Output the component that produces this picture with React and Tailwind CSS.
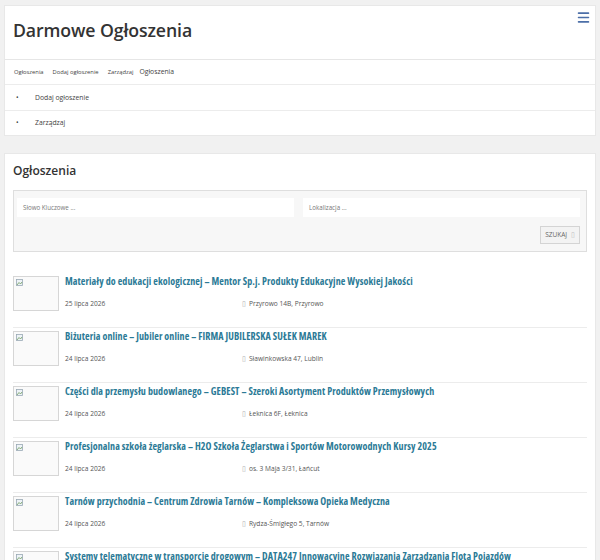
import { Menu } from "lucide-react";

const ads = [
  { title: "Materiały do edukacji ekologicznej – Mentor Sp.j. Produkty Edukacyjne Wysokiej Jakości", date: "25 lipca 2026", place: "Przyrowo 14B, Przyrowo" },
  { title: "Biżuteria online – Jubiler online – FIRMA JUBILERSKA SUŁEK MAREK", date: "24 lipca 2026", place: "Sławinkowska 47, Lublin" },
  { title: "Części dla przemysłu budowlanego – GEBEST – Szeroki Asortyment Produktów Przemysłowych", date: "24 lipca 2026", place: "Łeknica 6F, Łeknica" },
  { title: "Profesjonalna szkoła żeglarska – H2O Szkoła Żeglarstwa i Sportów Motorowodnych Kursy 2025", date: "24 lipca 2026", place: "os. 3 Maja 3/31, Łańcut" },
  { title: "Tarnów przychodnia – Centrum Zdrowia Tarnów – Kompleksowa Opieka Medyczna", date: "24 lipca 2026", place: "Rydza-Śmigłego 5, Tarnów" },
  { title: "Systemy telematyczne w transporcie drogowym – DATA247 Innowacyjne Rozwiązania Zarządzania Flotą Pojazdów", date: "24 lipca 2026", place: "Warszawa" },
];

function BrokenImg() {
  return (
    <div className="w-[46px] h-[35px] shrink-0 border border-[#d6d6d6] bg-[#fafafa] p-[2px]">
      <svg width="8" height="8" viewBox="0 0 8 8">
        <rect x="0.5" y="0.5" width="6" height="6" fill="#eef3f7" stroke="#9aa9b5" strokeWidth="0.8" />
        <path d="M1 6 L3 3.5 L4.5 5 L6 3" stroke="#6c9a5a" strokeWidth="0.8" fill="none" />
      </svg>
    </div>
  );
}

export default function App() {
  return (
    <div className="min-h-[560px] bg-[#f1f1f1] px-[4px] pt-[5px] font-['Open_Sans',sans-serif] text-[#333] overflow-hidden">
      <div className="bg-white border border-[#e8e8e8]">
        <div className="relative h-[54px] flex items-center px-[8px] pb-[4px] border-b border-[#e6e6e6]">
          <h1 className="text-[17.7px] font-semibold tracking-[-0.1px] text-[#333]">Darmowe Ogłoszenia</h1>
          <Menu className="absolute right-[4px] top-[4px] text-[#4c6fa8]" size={15} strokeWidth={2.5} />
        </div>
        <div className="h-[25px] flex items-center pl-[9px] pt-[1px] border-b border-[#ececec] text-[5.8px] text-[#444]">
          <span className="mr-[9px]">Ogłoszenia</span>
          <span className="mr-[9px]">Dodaj ogłoszenie</span>
          <span>Zarządzaj</span>
          <span className="text-[6.8px] ml-[6px]">Ogłoszenia</span>
        </div>
        <div className="text-[6.8px] text-[#444]">
          <div className="h-[26px] flex items-center pl-[11px] pt-[1px] border-b border-[#ececec]">
            <span className="w-[19px]">•</span>Dodaj ogłoszenie
          </div>
          <div className="h-[24px] flex items-center pl-[11px]">
            <span className="w-[19px]">•</span>Zarządzaj
          </div>
        </div>
      </div>

      <div className="mt-[17px] bg-white border border-[#e8e8e8] px-[8px] pt-[8px] pb-[10px]">
        <h2 className="text-[12px] font-semibold text-[#333] leading-[18px]">Ogłoszenia</h2>
        <div className="mt-[10px] bg-[#f7f7f7] border border-[#dedede] pl-[3px] pr-[6px] pt-[7px] pb-[7px]">
          <div className="flex gap-[9px]">
            <div className="flex-1 h-[19px] bg-white flex items-center px-[6px] text-[6.2px] text-[#777]">Słowo Kluczowe ...</div>
            <div className="flex-1 h-[19px] bg-white flex items-center px-[6px] text-[6.2px] text-[#777]">Lokalizacja ...</div>
          </div>
          <div className="flex justify-end mt-[9px]">
            <button className="h-[18px] px-[4px] border border-[#d4d4d4] bg-[#f3f3f3] text-[6.5px] text-[#666] flex items-center gap-[4px]">
              SZUKAJ <span className="text-[#bbb]">▯</span>
            </button>
          </div>
        </div>

        <div className="mt-[21px]">
          {ads.map((a, i) => (
            <div key={i} className="flex gap-[6px] h-[55px] pt-[3px] border-b border-[#ececec]">
              <BrokenImg />
              <div className="flex-1 min-w-0">
                <div className="text-[10px] font-bold font-stretch-[85%] tracking-[0.1px] text-[#2b7a96] leading-[11px] whitespace-nowrap">{a.title}</div>
                <div className="flex mt-[12px] text-[6.6px] text-[#555]">
                  <span className="w-[177px]">{a.date}</span>
                  <span className="text-[#aaa] mr-[3px]">▯</span>
                  <span>{a.place}</span>
                </div>
              </div>
            </div>
          ))}
        </div>
      </div>
    </div>
  );
}
